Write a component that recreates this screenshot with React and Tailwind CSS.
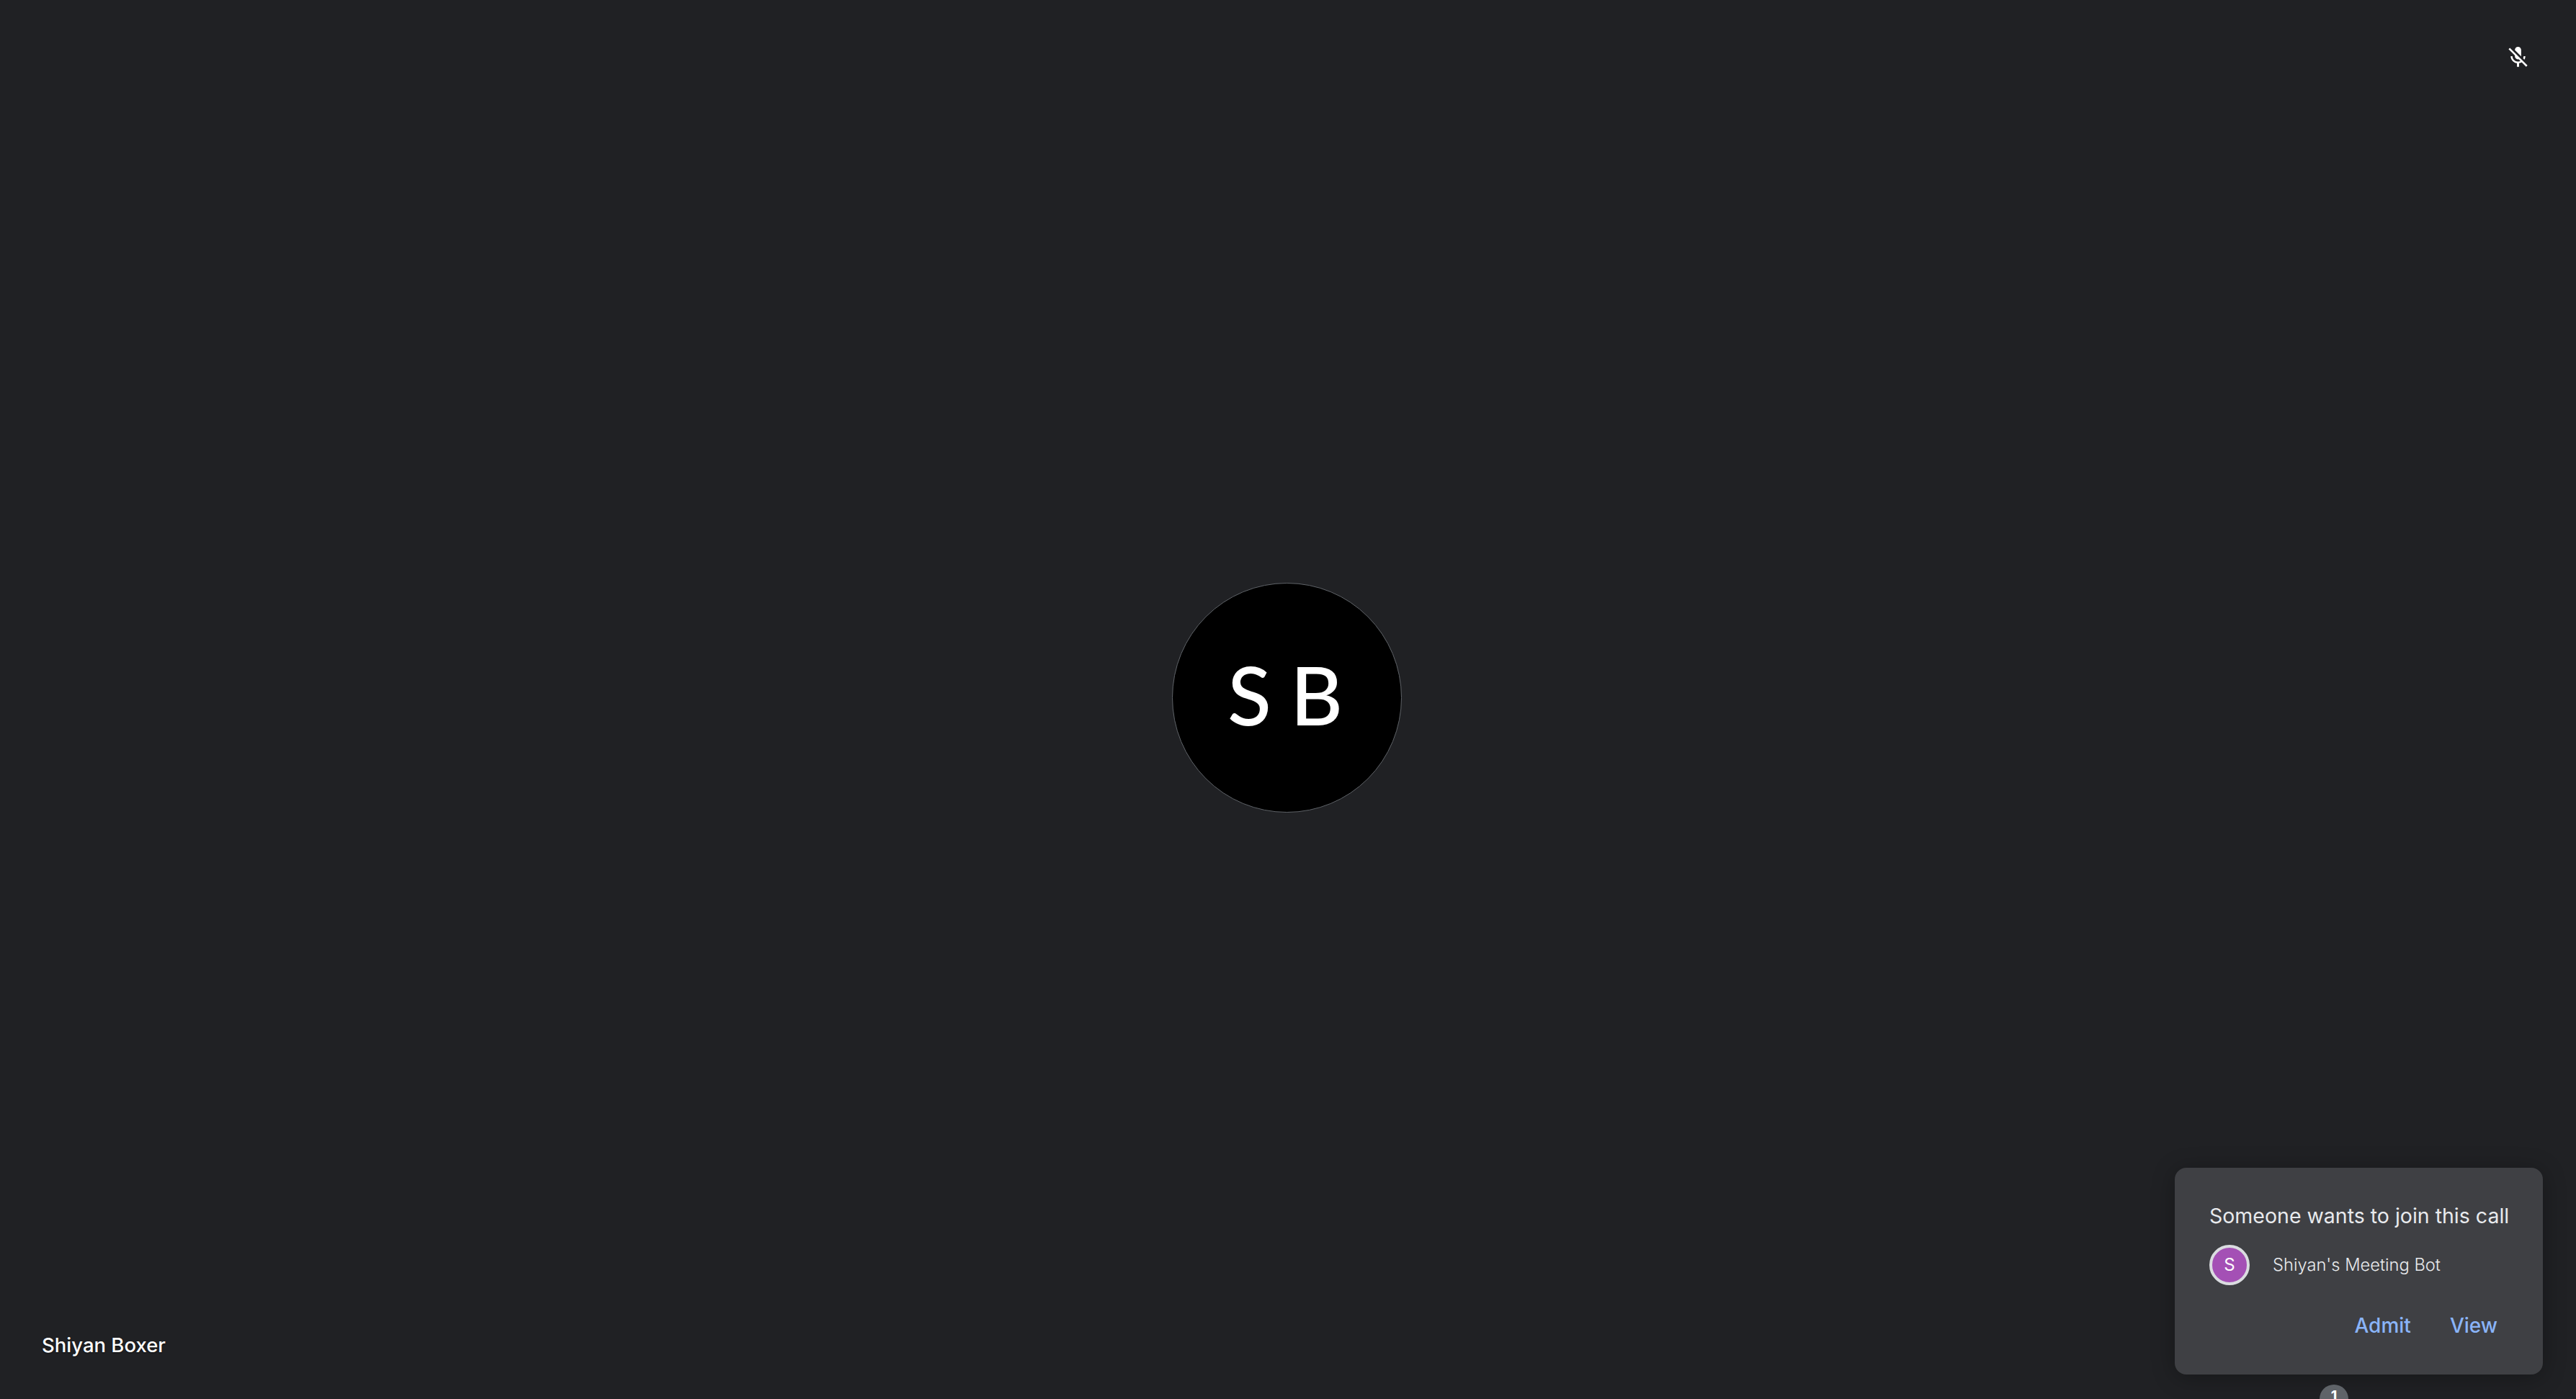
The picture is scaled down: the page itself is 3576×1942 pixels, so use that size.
import React from 'react';

const MicOffIcon = ({ className }) => (
  <svg className={className} viewBox="0 0 24 24" fill="currentColor">
    <path d="M19 11h-1.7c0 .74-.16 1.43-.43 2.05l1.23 1.23c.56-.98.9-2.09.9-3.28zm-4.02.17c0-.06.02-.11.02-.17V5c0-1.66-1.34-3-3-3s-3 1.34-3 3v.18l5.98 5.99zM4.27 3L3 4.27l6.01 6.01V11c0 1.66 1.33 3 2.99 3 .22 0 .44-.03.65-.08l1.66 1.66c-.71.33-1.5.52-2.31.52-2.76 0-5.3-2.1-5.3-5.1H5c0 3.41 2.72 6.23 6 6.72V21h2v-3.28c.91-.13 1.77-.45 2.54-.9L19.73 21 21 19.73 4.27 3z" />
  </svg>
);

const App = () => {
  return (
    <div className="relative h-screen w-full overflow-hidden bg-[#202124] font-['Inter',sans-serif] flex items-center justify-center pr-[4px] pb-[6px]">

      {/* Participant avatar */}
      <div className="w-[319px] h-[319px] rounded-full bg-black border border-[#5f6368] flex items-center justify-center">
        <span className="text-white text-[112px] leading-none font-['Lato',sans-serif] font-medium whitespace-pre pb-[8px] pr-[5px] tracking-[-1px]">S B</span>
      </div>

      {/* Muted indicator */}
      <MicOffIcon className="absolute top-[62px] left-[3478px] w-[35px] h-[35px] text-white" />

      {/* Name label */}
      <div className="absolute left-[58px] bottom-[56px] text-[27.5px] leading-[38px] text-white font-medium [text-shadow:0_1px_2px_rgba(0,0,0,0.6)]">
        Shiyan Boxer
      </div>

      {/* Join request card */}
      <div className="absolute left-[3019px] top-[1621px] w-[511px] h-[287px] rounded-2xl bg-[#3f4044] shadow-[0_4px_32px_rgba(0,0,0,0.3)] pt-[47px] pl-[48px] pr-[48px]">
        <p className="text-[28.5px] leading-[40px] text-[#e8eaed] font-normal whitespace-nowrap">Someone wants to join this call</p>
        <div className="flex items-center mt-[20px] gap-[32px]">
          <div className="w-[56px] h-[56px] rounded-full border-4 border-[#dadce0] bg-[#a450b5] flex items-center justify-center text-white text-[24px] leading-none">
            S
          </div>
          <span className="text-[23.7px] font-light text-[#e8eaed] whitespace-nowrap">Shiyan's Meeting Bot</span>
        </div>
        <div className="flex justify-end gap-[54px] mt-[36px] pr-[15px] text-[28px] leading-[40px] font-medium text-[#8ab4f8]">
          <span>Admit</span>
          <span>View</span>
        </div>
      </div>

      {/* Participant count badge */}
      <div className="absolute left-[3220px] top-[1922px] w-[40px] h-[40px] rounded-full bg-[#5f6368] flex justify-center pt-[2px] text-[20px] leading-[28px] font-bold text-white">
        1
      </div>
    </div>
  );
};

export default App;
